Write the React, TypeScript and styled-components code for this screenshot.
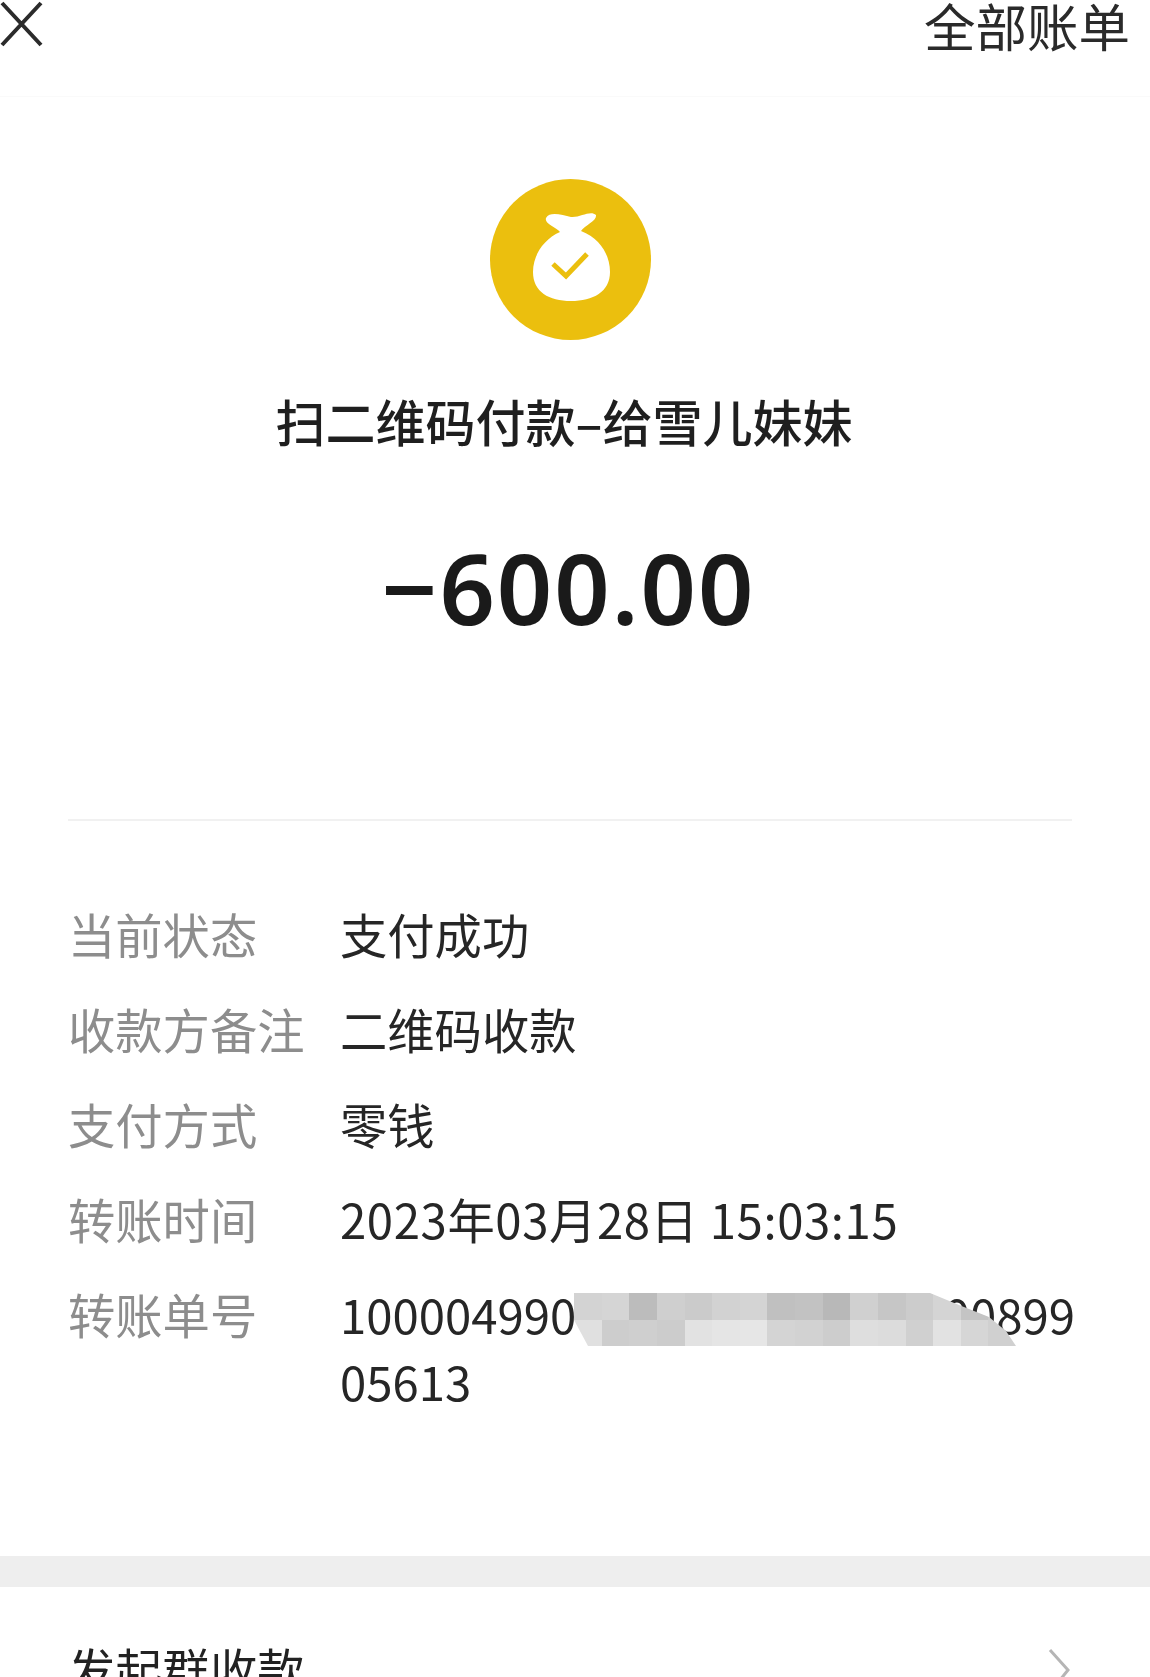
import React from 'react';
import styled, { createGlobalStyle } from 'styled-components';

const GlobalStyle = createGlobalStyle`
    html, body {
        margin: 0;
        padding: 0;
        background: #fff;
    }
    body {
        font-family: "Noto Sans CJK SC", "Noto Sans", sans-serif;
        color: #1c1c1c;
    }
`;

const Page = styled.div`
    width: 1150px;
    height: 1677px;
    overflow: hidden;
    background: #fff;
    filter: blur(0.5px);
`;

const TopBar = styled.div`
    height: 97px;
    box-sizing: border-box;
    display: flex;
    align-items: flex-start;
    justify-content: space-between;
    padding: 0 20px 0 0;
    border-bottom: 1px solid #fafafa;
`;

const CloseIcon = styled.svg`
    width: 44px;
    height: 48px;
    display: block;
`;

const AllBills = styled.div`
    font-size: 51.5px;
    line-height: 50px;
    color: #2a2a2a;
`;

const Summary = styled.div`
    display: flex;
    flex-direction: column;
    align-items: center;
    padding: 82px 10px 0 0;
    height: 722px;
    box-sizing: border-box;
`;

const Badge = styled.svg`
    width: 161px;
    height: 161px;
    display: block;
`;

const Title = styled.div`
    margin: 46px 12px 0 0;
    font-size: 50px;
    font-weight: 500;
    line-height: 68px;
    color: #1f1f1f;
`;

const Amount = styled.div`
    margin: 78px 3px 0 0;
    font-family: "Noto Sans", sans-serif;
    font-size: 97px;
    font-weight: 600;
    letter-spacing: 2px;
    line-height: 110px;
    color: #1a1a1a;
`;

const Divider = styled.div`
    height: 2px;
    margin: 0 78px 0 68px;
    background: #f1f1f1;
`;

const Details = styled.div`
    display: flex;
    flex-direction: column;
    gap: 28px;
    padding: 79px 74px 0 68px;
    height: 735px;
    box-sizing: border-box;
`;

const Row = styled.div`
    display: grid;
    grid-template-columns: 272px 1fr;
    font-size: 47.3px;
    line-height: 67px;
`;

const Label = styled.div`
    color: #8d8d8d;
`;

const Value = styled.div<{ $spaced?: boolean }>`
    position: relative;
    color: #262626;
    word-break: break-all;
    letter-spacing: ${(p) => (p.$spaced ? '0.6px' : '0')};
`;

const Mosaic = styled.div`
    position: absolute;
    left: 234px;
    top: 13px;
    width: 442px;
    height: 53px;
    display: grid;
    grid-template-columns: repeat(16, 1fr);
    grid-template-rows: 27px 26px;
    clip-path: polygon(0 0, 356px 0, 385px 12px, 415px 24px, 432px 38px, 442px 53px, 14px 53px, 0 27px);
`;

const MosaicCell = styled.div<{ $shade: string }>`
    background: ${(p) => p.$shade};
`;

const Band = styled.div`
    height: 31px;
    background: #eeeeee;
`;

const ActionRow = styled.div`
    display: flex;
    align-items: center;
    justify-content: space-between;
    padding: 48px 78px 0 68px;
    font-size: 47.3px;
    line-height: 67px;
    color: #222;
`;

const Chevron = styled.svg`
    width: 24px;
    height: 42px;
    display: block;
`;

const shades = [
    '#d3d3d3', '#d5d5d5', '#bcbcbc', '#cfcfcf', '#cbcbcb', '#d2d2d2', '#d4d4d4', '#c0c0c0',
    '#c2c2c2', '#b8b8b8', '#d0d0d0', '#c6c6c6', '#cccccc', '#d4d4d4', '#c4c4c4', '#cccccc',
    '#e0e0e0', '#cdcdcd', '#cfcfcf', '#cccccc', '#e2e2e2', '#e5e5e5', '#e6e6e6', '#d4d4d4',
    '#d2d2d2', '#cdcdcd', '#dedede', '#dcdcdc', '#d0d0d0', '#e2e2e2', '#d6d6d6', '#d0d0d0',
];

const rows = [
    { label: '当前状态', value: '支付成功' },
    { label: '收款方备注', value: '二维码收款' },
    { label: '支付方式', value: '零钱' },
    { label: '转账时间', value: '2023年03月28日 15:03:15', spaced: true },
];

export default function App() {
    return (
        <Page>
            <GlobalStyle />
            <TopBar>
                <CloseIcon viewBox="0 0 44 48">
                    <path d="M2 3 L41 45 M41 3 L2 45" stroke="#2b2b2b" strokeWidth="4" fill="none" />
                </CloseIcon>
                <AllBills>全部账单</AllBills>
            </TopBar>

            <Summary>
                <Badge viewBox="0 0 161 161">
                    <circle cx="80.5" cy="80.5" r="80.5" fill="#ebbf0e" />
                    <path
                        d="M56 39 C60 32 72 36 81 38 C90 39 100 31 106 36 C107 42 95 46 91 52 C110 59 120 76 120 93 C120 113 103 122 81 122 C59 122 43 113 43 93 C43 76 54 60 70 53 C66 48 54 45 56 39 Z"
                        fill="#ffffff"
                    />
                    <path d="M63 85 L76 97 L97 75" stroke="#ebbf0e" strokeWidth="5" fill="none" />
                </Badge>
                <Title>扫二维码付款–给雪儿妹妹</Title>
                <Amount>−600.00</Amount>
            </Summary>

            <Divider />

            <Details>
                {rows.map((row) => (
                    <Row key={row.label}>
                        <Label>{row.label}</Label>
                        <Value $spaced={row.spaced}>{row.value}</Value>
                    </Row>
                ))}
                <Row>
                    <Label>转账单号</Label>
                    <Value>
                        100004990000000000000000089905613
                        <Mosaic>
                            {shades.map((shade, index) => (
                                <MosaicCell key={index} $shade={shade} />
                            ))}
                        </Mosaic>
                    </Value>
                </Row>
            </Details>

            <Band />

            <ActionRow>
                <span>发起群收款</span>
                <Chevron viewBox="0 0 24 42">
                    <path d="M2 2 L20 22 L4 42" stroke="#b5b5b5" strokeWidth="3" fill="none" />
                </Chevron>
            </ActionRow>
        </Page>
    );
}
